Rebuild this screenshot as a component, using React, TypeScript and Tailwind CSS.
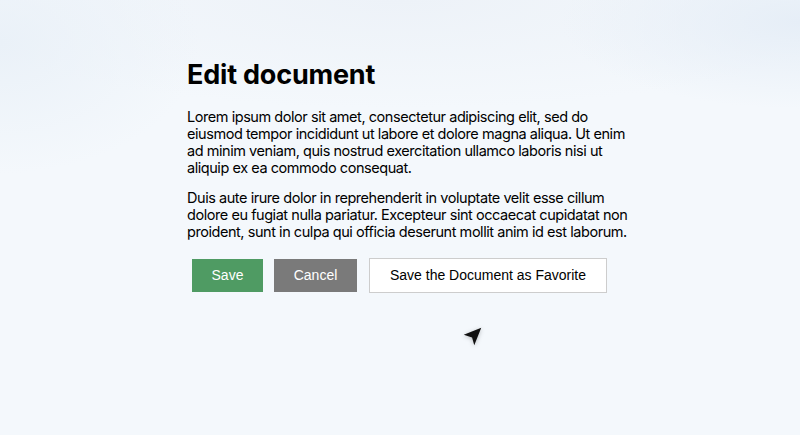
import React from "react";

export default function App() {
  return (
    <div
      className="relative w-full h-[435px] overflow-hidden bg-[#f4f8fc]"
      style={{ fontFamily: "Inter, 'Liberation Sans', sans-serif" }}
    >
      <div className="pointer-events-none absolute inset-0 bg-[radial-gradient(ellipse_60%_25%_at_50%_0%,#edf2f8_0%,rgba(244,248,252,0)_100%)]" />
      <div className="pointer-events-none absolute inset-0 bg-[radial-gradient(ellipse_30%_20%_at_100%_5%,#e6eef7_0%,rgba(244,248,252,0)_100%)]" />
      <div className="pointer-events-none absolute inset-0 bg-[radial-gradient(ellipse_25%_30%_at_0%_10%,#eaf1f8_0%,rgba(244,248,252,0)_100%)]" />

      <div className="relative ml-[187px] w-[445px] pt-[59px] text-black">
        <h1 className="text-[27px] leading-[32px] font-bold tracking-[-0.2px]">Edit document</h1>
        <p className="mt-[17px] text-[14.5px] leading-[17px] tracking-[-0.45px]">
          Lorem ipsum dolor sit amet, consectetur adipiscing elit, sed do eiusmod tempor incididunt ut labore et
          dolore magna aliqua. Ut enim ad minim veniam, quis nostrud exercitation ullamco laboris nisi ut aliquip ex ea
          commodo consequat.
        </p>
        <p className="mt-[13px] text-[14.5px] leading-[17px] tracking-[-0.45px]">
          Duis aute irure dolor in reprehenderit in voluptate velit esse cillum dolore eu fugiat nulla pariatur.
          Excepteur sint occaecat cupidatat non proident, sunt in culpa qui officia deserunt mollit anim id est laborum.
        </p>
        <div
          className="mt-[18px] ml-[5px] flex items-center gap-[11px] text-[14px]"
          style={{ fontFamily: "'Liberation Sans', Arial, sans-serif" }}
        >
          <button className="h-[33px] w-[71px] border border-[#4f9b63] bg-[#4f9b63] text-white">Save</button>
          <button className="h-[33px] w-[83px] border border-[#7a7a7a] bg-[#7a7a7a] text-white">Cancel</button>
          <button className="ml-[1px] h-[35px] w-[238px] border border-[#cdcdcd] bg-white text-black">
            Save the Document as Favorite
          </button>
        </div>
      </div>

      <svg
        className="absolute left-[462px] top-[326px] drop-shadow-[0_1px_2px_rgba(0,0,0,0.25)]"
        width="21"
        height="21"
        viewBox="0 0 24 24"
      >
        <polygon points="2 10 22 2 14 22 11.5 13 2 10" fill="#111" />
      </svg>
    </div>
  );
}
